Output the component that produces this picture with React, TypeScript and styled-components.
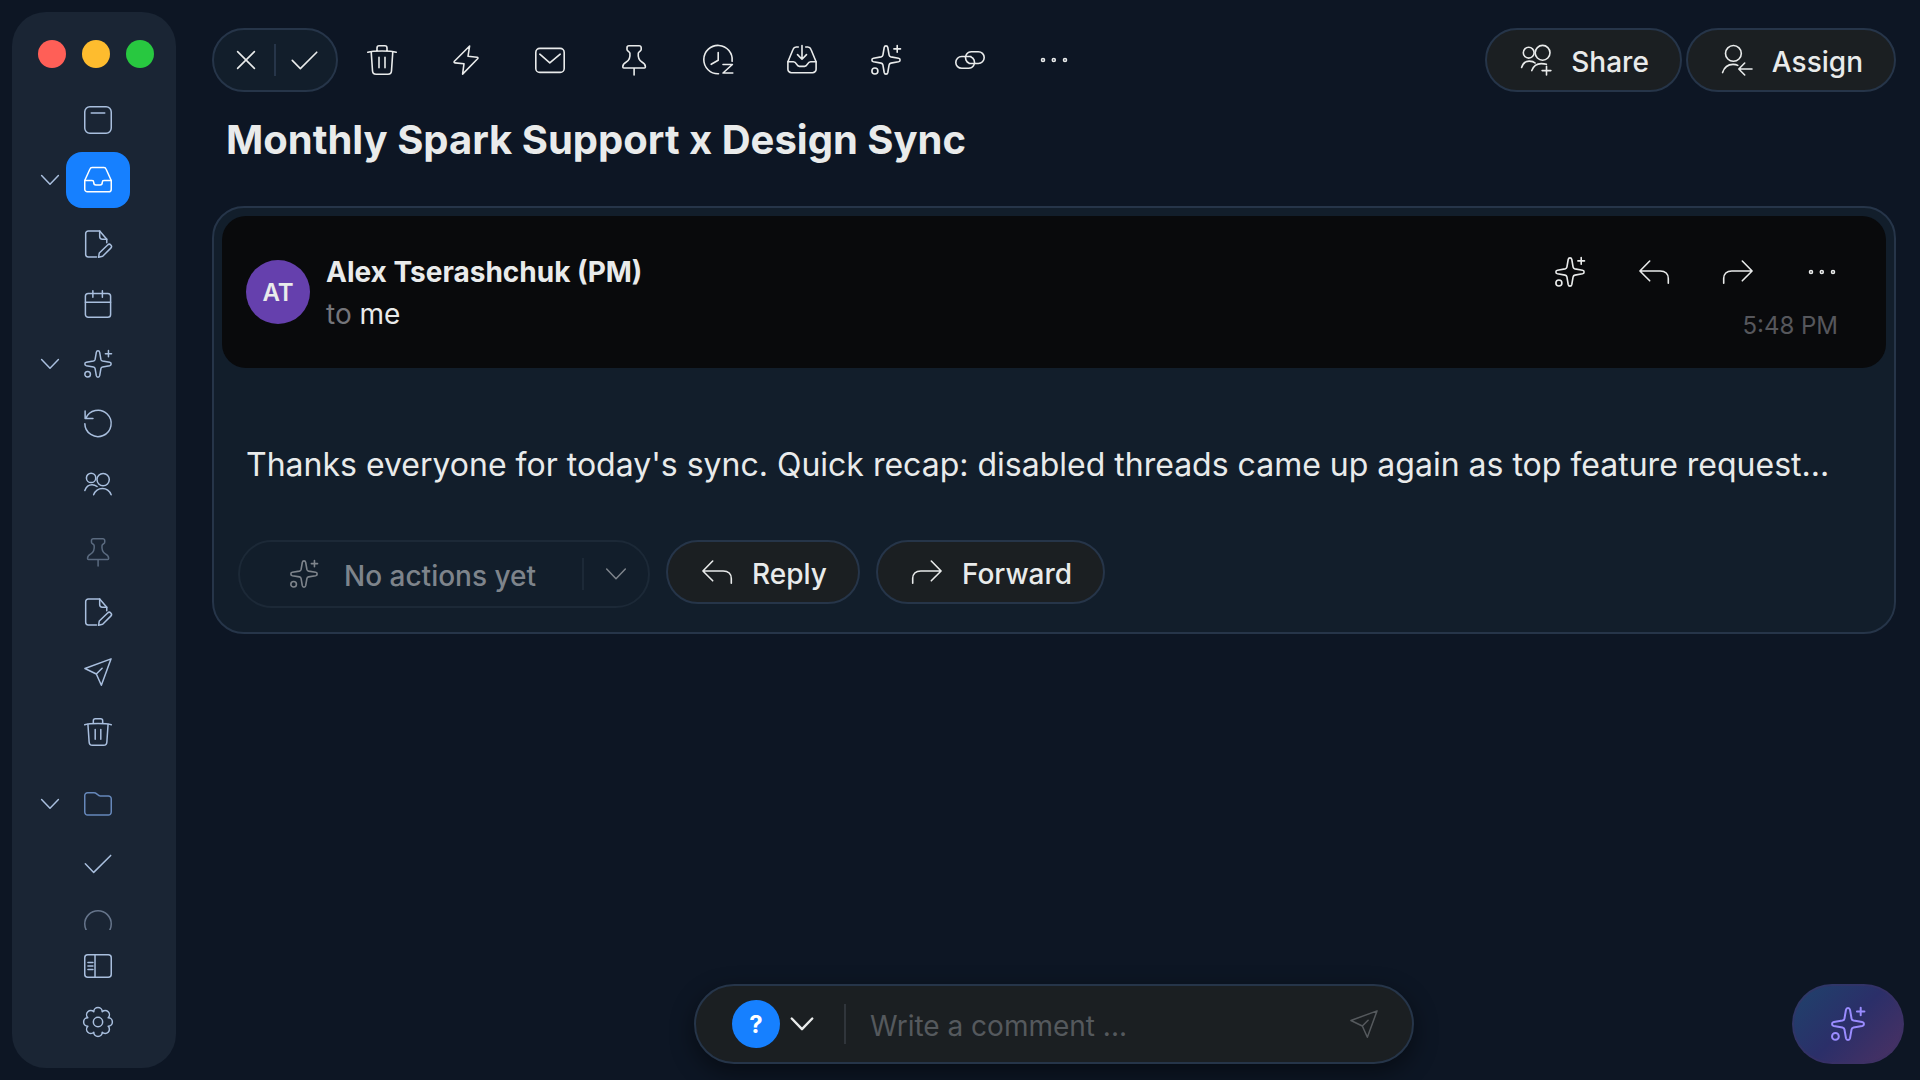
import React from "react";
import styled, { createGlobalStyle, css } from "styled-components";

const color = {
  page: "#0d1624",
  sidebar: "#1a2534",
  card: "#121e2b",
  header: "#090a0c",
  control: "#1b1f22",
  border: "#263549",
  text: "#e9ebeb",
  nav: "#a9bfde",
  navDim: "#5a6a7f",
  folder: "#6688ba",
  blue: "#1680ff",
  purple: "#6540ad",
};

const GlobalStyle = createGlobalStyle`
  *, *::before, *::after { box-sizing: border-box; }
  body {
    margin: 0;
    background: ${color.page};
    color: ${color.text};
    font-family: Inter, "Liberation Sans", sans-serif;
    font-size: 28px;
  }
  button, input { font: inherit; color: inherit; }
`;

/* ---------- icons, all drawn on a 30 unit grid ---------- */

const STAR =
  "M15 .9c.9 0 1.6.6 1.8 1.6l1.3 7.6c.2 1 .8 1.6 1.8 1.8l7.6 1.3c1 .2 1.6.9 1.6 1.8s-.6 1.6-1.6 1.8l-7.6 1.3c-1 .2-1.6.8-1.8 1.8l-1.3 7.6c-.2 1-.9 1.6-1.8 1.6s-1.6-.6-1.8-1.6l-1.3-7.6c-.2-1-.8-1.6-1.8-1.8l-7.6-1.3c-1-.2-1.6-.9-1.6-1.8s.6-1.6 1.6-1.8l7.6-1.3c1-.2 1.6-.8 1.8-1.8l1.3-7.6c.2-1 .9-1.6 1.8-1.6z";

const gearPath = () => {
  const at = (deg: number) => {
    const a = ((deg - 90) * Math.PI) / 180;
    return `${(15 + 11.8 * Math.cos(a)).toFixed(2)} ${(15 + 11.8 * Math.sin(a)).toFixed(2)}`;
  };
  let d = `M${at(-22.5)}`;
  for (let k = 0; k < 8; k++) d += `A4.3 4.3 0 0 1 ${at(k * 45 + 22.5)}`;
  return d + "z";
};

const icons = {
  note: (
    <>
      <rect x=".8" y=".8" width="28.4" height="28.4" rx="5.5" />
      <path d="M7.8 7.6h14.4" />
    </>
  ),
  inbox: (
    <>
      <path d="M8.6 1.6h12.8a2.4 2.4 0 0 1 2.2 1.6L29.2 15.6v9.2a2.8 2.8 0 0 1-2.8 2.8H3.6a2.8 2.8 0 0 1-2.8-2.8v-9.2L6.4 3.2a2.4 2.4 0 0 1 2.2-1.6z" />
      <path d="M.8 15.6h7.8c1.4 0 1.8.6 1.8 1.8 0 2 .6 3 2.4 3h4.4c1.8 0 2.4-1 2.4-3 0-1.2.4-1.8 1.8-1.8h7.8" />
    </>
  ),
  edit: (
    <>
      <path d="M13.4 28.9H4.6a2.8 2.8 0 0 1-2.8-2.8V3.8A2.8 2.8 0 0 1 4.6 1h12.2l7.6 8.8v3.9" />
      <path d="M16.8 1v6a2.8 2.8 0 0 0 2.8 2.8h4.8" />
      <path d="M15.6 29.2l.8-4.6 8.9-8.6a2.4 2.4 0 0 1 3.4 3.4l-8.7 8.7z" />
    </>
  ),
  calendar: (
    <>
      <rect x="1.5" y="3.7" width="27" height="25.5" rx="3" />
      <path d="M1.5 13h27M9.5.7v7.2M19.7.7v7.2" />
    </>
  ),
  sparkle: (
    <>
      <path d={STAR} />
      <circle cx="3.9" cy="26" r="3" />
      <path d="M26.2.6v6.6M22.9 3.9h6.6" />
    </>
  ),
  undo: (
    <path d="M.9 14.6A14.1 14.1 0 1 0 1.9 9.2M1.2 1v8.2h8.4" />
  ),
  users: (
    <>
      <circle cx="7.6" cy="8.5" r="5" />
      <circle cx="20.5" cy="10.3" r="6.6" />
      <path d="M.9 21.9c1.4-4 4.2-6.2 7.7-6.2 2 0 3.8.7 5.4 2M10.3 26.6c1.7-4.2 5.2-6.7 9.4-6.7s7.7 2.5 9.4 6.7" />
    </>
  ),
  pin: (
    <path d="M10 .8h10.2a2 2 0 0 1 2 2v1.7c0 1.6-2.6 2-2.9 3.7-.5 4.6.7 7.2 3.6 8.8 2.4 1.3 3.5 2.3 3.5 4.7v.3a1 1 0 0 1-1 1H4.8a1 1 0 0 1-1-1v-.3c0-2.4 1.1-3.4 3.5-4.7 2.9-1.6 4.1-4.2 3.6-8.8-.3-1.7-2.9-2.1-2.9-3.7V2.8a2 2 0 0 1 2-2zM15.1 23v7" />
  ),
  send: (
    <path d="M29 .9L1 11.2l12.2 5.9 5.4 12.1zM13.2 17.1l6.2-6.2" />
  ),
  trash: (
    <>
      <path d="M.8 7.2C4 6.3 9 6 15 6s11 .3 14.2 1.2M10 6V2.9A2.1 2.1 0 0 1 12.1.8h5.8A2.1 2.1 0 0 1 20 2.9V6" />
      <path d="M4.2 6.7l1.3 19a3.6 3.6 0 0 0 3.6 3.5h11.8a3.6 3.6 0 0 0 3.6-3.5l1.3-19M12 12.3v10.5M18 12.3v10.5" />
    </>
  ),
  folder: (
    <path d="M.8 23.7V6A3.1 3.1 0 0 1 3.9 2.9h6.8c1.2 0 2 .4 2.9 1.2 1.1 1 2.1 2.3 3.8 2.3h8.7a3.1 3.1 0 0 1 3.1 3.1v14.2a3.1 3.1 0 0 1-3.1 3.1H3.9a3.1 3.1 0 0 1-3.1-3.1z" />
  ),
  check: <path d="M1.4 14.8l9 9.2L28.6 5.8" />,
  circle: <circle cx="15" cy="15" r="14.2" />,
  panel: (
    <>
      <rect x=".8" y="2.9" width="28.4" height="24.2" rx="3.2" />
      <path d="M11.8 2.9v24.2M4.2 11.2h5.4M4.2 15h5.4M4.2 18.8h5.4" />
    </>
  ),
  gear: (
    <>
      <path d={gearPath()} />
      <circle cx="15" cy="15" r="5" />
    </>
  ),
  close: <path d="M1 1l28 28M29 1L1 29" />,
  bolt: (
    <path d="M18.6 1L3.4 16.2c-.6.7-.4 1.6.6 1.7l9 .8-1.4 10.4L26.6 13.8c.7-.8.4-1.5-.6-1.6l-9-.9z" />
  ),
  mail: (
    <>
      <rect x=".8" y="3.4" width="28.4" height="24" rx="4" />
      <path d="M4.8 9.2l10 8.6 10.4-8.6" />
    </>
  ),
  snooze: (
    <>
      <path d="M29.1 16.3A14.2 14.2 0 1 0 15.5 28.8" />
      <path d="M15.2 7.5v7.8l-7 4M20 19.5h9.4L20 28h9.8" />
    </>
  ),
  archive: (
    <>
      <path d="M11.3 2H9.2a3.3 3.3 0 0 0-3.1 2.2L.9 16.8v7.4a3.5 3.5 0 0 0 3.5 3.5h21.2a3.5 3.5 0 0 0 3.5-3.5v-7.4L23.9 4.2A3.3 3.3 0 0 0 20.8 2h-2.1" />
      <path d="M.9 16.8h5.5c3.6 0 2.7 4.6 6 4.6h5.2c3.3 0 2.4-4.6 6-4.6h5.5M15 .5v13.7M10.5 9.6l4.5 4.6 4.5-4.6" />
    </>
  ),
  link: (
    <>
      <path d="M14 18.5h9.3a5.9 5.9 0 0 0 0-11.8h-7a5.9 5.9 0 0 0-5.4 8.2c.6 1.5 1.7 2.7 3.1 3.2" />
      <path d="M16 11.5H6.7a5.9 5.9 0 0 0 0 11.8h7a5.9 5.9 0 0 0 5.4-8.2c-.6-1.5-1.7-2.7-3.1-3.2" />
    </>
  ),
  dots: (
    <>
      <circle cx="4" cy="15" r="1.5" />
      <circle cx="14.8" cy="15" r="1.5" />
      <circle cx="26" cy="15" r="1.5" />
    </>
  ),
  share: (
    <>
      <circle cx="7.7" cy="7.7" r="5.4" />
      <circle cx="21.6" cy="7.8" r="7.4" />
      <path d="M.6 22.5c1.2-4 4-6.4 7.6-6.4 2.4 0 4.5.4 5.9 1.9M10.8 25.6c1.6-4.6 5-7 9.4-7 2.2 0 3.8.2 5.2.7M25.5 21.2v8.8M21.1 25.6h8.8" />
    </>
  ),
  assign: (
    <>
      <circle cx="11.4" cy="8.4" r="7.9" />
      <path d="M.6 27.6c1.6-5.2 5.6-8.2 10.4-8.2 1.8 0 3.4.2 4.8 1M17 24h13M22.7 18l-5.9 6 5.9 6" />
    </>
  ),
  reply: (
    <path d="M10.7 4L.9 14l9.8 9.8M.9 14h20.3c5.2 0 8.1 3.2 8.1 7.6v4.6" />
  ),
  forward: (
    <path d="M19.3 4l9.8 10-9.8 9.8M29.1 14H8.8C3.6 14 .7 17.2.7 21.6v4.6" />
  ),
  chevron: <path d="M1 7.5l14 14.5L29 7.5" />,
};

type IconName = keyof typeof icons;

const Glyph = styled.svg<{ $size: number }>`
  display: block;
  flex: none;
  width: ${(p) => p.$size}px;
  height: ${(p) => p.$size}px;
  overflow: visible;
  fill: none;
  stroke: currentColor;
  stroke-linecap: round;
  stroke-linejoin: round;
`;

const Icon = ({ name, size = 30, weight = 1.6 }: { name: IconName; size?: number; weight?: number }) => (
  <Glyph $size={size} viewBox="0 0 30 30" strokeWidth={(weight * 30) / size} aria-hidden="true">
    {icons[name]}
  </Glyph>
);

/* ---------- shell ---------- */

const Shell = styled.div`
  display: flex;
  gap: 36px;
  height: 100vh;
  padding: 12px 24px 12px 12px;
`;

const Sidebar = styled.aside`
  flex: none;
  display: flex;
  flex-direction: column;
  width: 164px;
  padding: 28px 0 18px;
  border-radius: 34px;
  background: ${color.sidebar};
`;

const WindowControls = styled.div`
  display: flex;
  gap: 16px;
  padding-left: 26px;
  margin-bottom: 22px;
`;

const Light = styled.button<{ $fill: string }>`
  flex: none;
  width: 28px;
  height: 28px;
  padding: 0;
  border: 0;
  border-radius: 50%;
  background: ${(p) => p.$fill};
`;

const NavScroll = styled.nav`
  flex: 1;
  min-height: 0;
  display: flex;
  flex-direction: column;
  overflow: hidden;
`;

const NavGroup = styled.div<{ $space?: number }>`
  flex: none;
  padding-top: ${(p) => p.$space ?? 0}px;
`;

const NavFooter = styled.div`
  padding-top: 8px;
`;

const NavRow = styled.div<{ $height: number }>`
  display: flex;
  align-items: center;
  gap: 4px;
  height: ${(p) => p.$height}px;
  padding-left: 26px;
  color: ${color.nav};
`;

const plainButton = css`
  display: flex;
  align-items: center;
  justify-content: center;
  padding: 0;
  border: 0;
  background: none;
`;

const Expander = styled.button`
  ${plainButton}
  width: 24px;
  height: 24px;
`;

const ExpanderSpace = styled.span`
  width: 24px;
`;

const NavButton = styled.button<{ $active?: boolean; $tone?: string }>`
  ${plainButton}
  width: 64px;
  height: 56px;
  border-radius: 16px;
  background: ${(p) => (p.$active ? color.blue : "none")};
  color: ${(p) => (p.$active ? "#fff" : p.$tone ?? "inherit")};
`;

type NavEntry = { icon: IconName; label: string; open?: boolean; active?: boolean; tone?: string };

const NavItem = ({ icon, label, open, active, tone, height = 60 }: NavEntry & { height?: number }) => (
  <NavRow $height={height}>
    {open ? (
      <Expander aria-label={`Collapse ${label}`}>
        <Icon name="chevron" size={18} weight={1.5} />
      </Expander>
    ) : (
      <ExpanderSpace />
    )}
    <NavButton aria-label={label} $active={active} $tone={tone}>
      <Icon name={icon} size={28} weight={1.5} />
    </NavButton>
  </NavRow>
);

const navGroups: { space: number; items: NavEntry[] }[] = [
  {
    space: 0,
    items: [
      { icon: "note", label: "Home" },
      { icon: "inbox", label: "Inbox", open: true, active: true },
    ],
  },
  {
    space: 4,
    items: [
      { icon: "edit", label: "Drafts" },
      { icon: "calendar", label: "Calendar" },
      { icon: "sparkle", label: "AI", open: true },
      { icon: "undo", label: "Recent" },
      { icon: "users", label: "Teams" },
    ],
  },
  {
    space: 8,
    items: [
      { icon: "pin", label: "Pins", tone: color.navDim },
      { icon: "edit", label: "Shared drafts" },
      { icon: "send", label: "Sent" },
      { icon: "trash", label: "Trash" },
    ],
  },
  {
    space: 12,
    items: [
      { icon: "folder", label: "Folders", open: true, tone: color.folder },
      { icon: "check", label: "Done" },
      { icon: "circle", label: "More", tone: "#66758b" },
    ],
  },
];

/* ---------- main column ---------- */

const Main = styled.main`
  flex: 1;
  min-width: 0;
  display: flex;
  flex-direction: column;
  padding: 16px 0 4px;
`;

const Toolbar = styled.div`
  display: flex;
  align-items: center;
  gap: 28px;
`;

const Triage = styled.div`
  display: flex;
  align-items: center;
  gap: 4px;
  height: 64px;
  padding: 0 8px;
  border: 2px solid ${color.border};
  border-radius: 32px;
  background: ${color.card};
`;

const TriageButton = styled.button`
  ${plainButton}
  width: 48px;
  height: 48px;
`;

const Divider = styled.span<{ $height: number; $tone?: string }>`
  flex: none;
  width: 2px;
  height: ${(p) => p.$height}px;
  background: ${(p) => p.$tone ?? color.border};
`;

const IconRow = styled.div`
  display: flex;
  gap: 52px;
`;

const IconButton = styled.button`
  ${plainButton}
  width: 32px;
  height: 52px;
`;

const ToolbarEnd = styled.div`
  display: flex;
  gap: 4px;
  margin-left: auto;
`;

const PillButton = styled.button`
  display: flex;
  align-items: center;
  gap: 20px;
  height: 64px;
  padding: 0 31px 0 34px;
  border: 2px solid ${color.border};
  border-radius: 32px;
  background: ${color.control};
  font-weight: 500;
  white-space: nowrap;
`;

const Label = styled.span`
  padding-top: 3px;
`;

const Title = styled.h1`
  margin: 24px 0 42px;
  padding-left: 14px;
  font-size: 40px;
  line-height: 48px;
  font-weight: 700;
`;

const Message = styled.article`
  padding: 8px 8px 24px;
  border: 2px solid ${color.border};
  border-radius: 32px;
  background: ${color.card};
`;

const MessageHeader = styled.header`
  display: flex;
  align-items: center;
  gap: 16px;
  min-height: 152px;
  padding: 0 48px 0 24px;
  border-radius: 24px;
  background: ${color.header};
`;

const Avatar = styled.span`
  flex: none;
  display: grid;
  place-items: center;
  width: 64px;
  height: 64px;
  border-radius: 50%;
  background: ${color.purple};
  font-size: 24px;
  font-weight: 600;
`;

const Sender = styled.div`
  padding-top: 2px;
  line-height: 42px;
`;

const SenderName = styled.div`
  font-weight: 700;
`;

const Muted = styled.span`
  color: #74757a;
`;

const HeaderEnd = styled.div`
  display: flex;
  flex-direction: column;
  align-items: flex-end;
  gap: 14px;
  margin-left: auto;
  padding-top: 2px;
`;

const Time = styled.time`
  color: #56575c;
  font-size: 24px;
  line-height: 28px;
`;

const Body = styled.p`
  margin: 77px 24px 55px;
  font-size: 32px;
  line-height: 40px;
  white-space: nowrap;
  overflow: hidden;
  text-overflow: ellipsis;
`;

const Actions = styled.div`
  display: flex;
  align-items: flex-start;
  gap: 16px;
  padding-left: 16px;
`;

const SplitPill = styled.div`
  display: flex;
  align-items: center;
  height: 68px;
  border: 2px solid #1c2937;
  border-radius: 34px;
  color: #7e848b;
`;

const SplitMain = styled.button`
  ${plainButton}
  gap: 26px;
  padding: 0 46px 0 50px;
  font-weight: 500;
`;

const SplitMore = styled.button`
  ${plainButton}
  width: 64px;
  height: 64px;
`;

const Composer = styled.form`
  display: flex;
  align-items: center;
  width: 720px;
  max-width: 100%;
  height: 80px;
  margin: auto auto 0;
  padding: 0 34px 0 36px;
  border: 2px solid ${color.border};
  border-radius: 40px;
  background: ${color.control};
  box-shadow: 0 8px 24px rgba(0, 0, 0, 0.45);
`;

const AudienceButton = styled.button`
  ${plainButton}
  gap: 11px;
  margin-right: 31px;
`;

const AudienceBadge = styled.span`
  display: grid;
  place-items: center;
  width: 48px;
  height: 48px;
  border-radius: 50%;
  background: ${color.blue};
  color: #fff;
  font-size: 24px;
  font-weight: 700;
`;

const CommentInput = styled.input`
  flex: 1;
  min-width: 0;
  padding: 3px 24px 0;
  border: 0;
  outline: 0;
  background: none;
  &::placeholder {
    color: #55595d;
    opacity: 1;
  }
`;

const SendButton = styled.button`
  ${plainButton}
  color: #55595d;
`;

const AssistantButton = styled.button`
  ${plainButton}
  position: fixed;
  right: 16px;
  bottom: 16px;
  width: 112px;
  height: 80px;
  border: 2px solid rgba(60, 50, 100, 0.5);
  border-radius: 40px;
  background: linear-gradient(135deg, #213f6b 10%, #2b2f69 50%, #4a3163 95%) border-box;
  color: #9a8cff;
`;

const tools: [IconName, string][] = [
  ["trash", "Delete"],
  ["bolt", "Quick actions"],
  ["mail", "Mark unread"],
  ["pin", "Pin"],
  ["snooze", "Snooze"],
  ["archive", "Move"],
  ["sparkle", "AI"],
  ["link", "Copy link"],
  ["dots", "More"],
];

const messageTools: [IconName, string][] = [
  ["sparkle", "AI"],
  ["reply", "Reply"],
  ["forward", "Forward"],
  ["dots", "More"],
];

const Pill = ({ icon, children }: { icon: IconName; children: string }) => (
  <PillButton>
    <Icon name={icon} />
    <Label>{children}</Label>
  </PillButton>
);

export default function App() {
  return (
    <>
      <GlobalStyle />
      <Shell>
        <Sidebar>
          <WindowControls>
            <Light $fill="#ff5f57" aria-label="Close window" />
            <Light $fill="#febc2e" aria-label="Minimize window" />
            <Light $fill="#28c840" aria-label="Zoom window" />
          </WindowControls>
          <NavScroll>
            {navGroups.map((group) => (
              <NavGroup key={group.space} $space={group.space}>
                {group.items.map((item) => (
                  <NavItem key={item.label} {...item} />
                ))}
              </NavGroup>
            ))}
          </NavScroll>
          <NavFooter>
            <NavItem icon="panel" label="Toggle sidebar" height={56} />
            <NavItem icon="gear" label="Settings" height={56} />
          </NavFooter>
        </Sidebar>

        <Main>
          <Toolbar>
            <Triage>
              <TriageButton aria-label="Close">
                <Icon name="close" size={18} />
              </TriageButton>
              <Divider $height={32} />
              <TriageButton aria-label="Done">
                <Icon name="check" size={27} />
              </TriageButton>
            </Triage>
            <IconRow>
              {tools.map(([name, label]) => (
                <IconButton key={name} aria-label={label}>
                  <Icon name={name} />
                </IconButton>
              ))}
            </IconRow>
            <ToolbarEnd>
              <Pill icon="share">Share</Pill>
              <Pill icon="assign">Assign</Pill>
            </ToolbarEnd>
          </Toolbar>

          <Title>Monthly Spark Support x Design Sync</Title>

          <Message>
            <MessageHeader>
              <Avatar>AT</Avatar>
              <Sender>
                <SenderName>Alex Tserashchuk (PM)</SenderName>
                <div>
                  <Muted>to</Muted> me
                </div>
              </Sender>
              <HeaderEnd>
                <IconRow>
                  {messageTools.map(([name, label]) => (
                    <IconButton key={name} aria-label={label}>
                      <Icon name={name} />
                    </IconButton>
                  ))}
                </IconRow>
                <Time>5:48 PM</Time>
              </HeaderEnd>
            </MessageHeader>
            <Body>
              Thanks everyone for today's sync. Quick recap: disabled threads came up again as top feature request...
            </Body>
            <Actions>
              <SplitPill>
                <SplitMain>
                  <Icon name="sparkle" size={28} />
                  <Label>No actions yet</Label>
                </SplitMain>
                <Divider $height={32} $tone="#1c2937" />
                <SplitMore aria-label="Choose action">
                  <Icon name="chevron" size={20} weight={1.5} />
                </SplitMore>
              </SplitPill>
              <Pill icon="reply">Reply</Pill>
              <Pill icon="forward">Forward</Pill>
            </Actions>
          </Message>

          <Composer onSubmit={(e) => e.preventDefault()}>
            <AudienceButton type="button" aria-label="Choose audience">
              <AudienceBadge>?</AudienceBadge>
              <Icon name="chevron" size={22} weight={2.4} />
            </AudienceButton>
            <Divider $height={40} $tone="#30353b" />
            <CommentInput aria-label="Comment" placeholder="Write a comment ..." />
            <SendButton type="submit" aria-label="Send">
              <Icon name="send" size={28} weight={1.5} />
            </SendButton>
          </Composer>
        </Main>
      </Shell>
      <AssistantButton aria-label="Open assistant">
        <Icon name="sparkle" size={34} weight={2} />
      </AssistantButton>
    </>
  );
}
